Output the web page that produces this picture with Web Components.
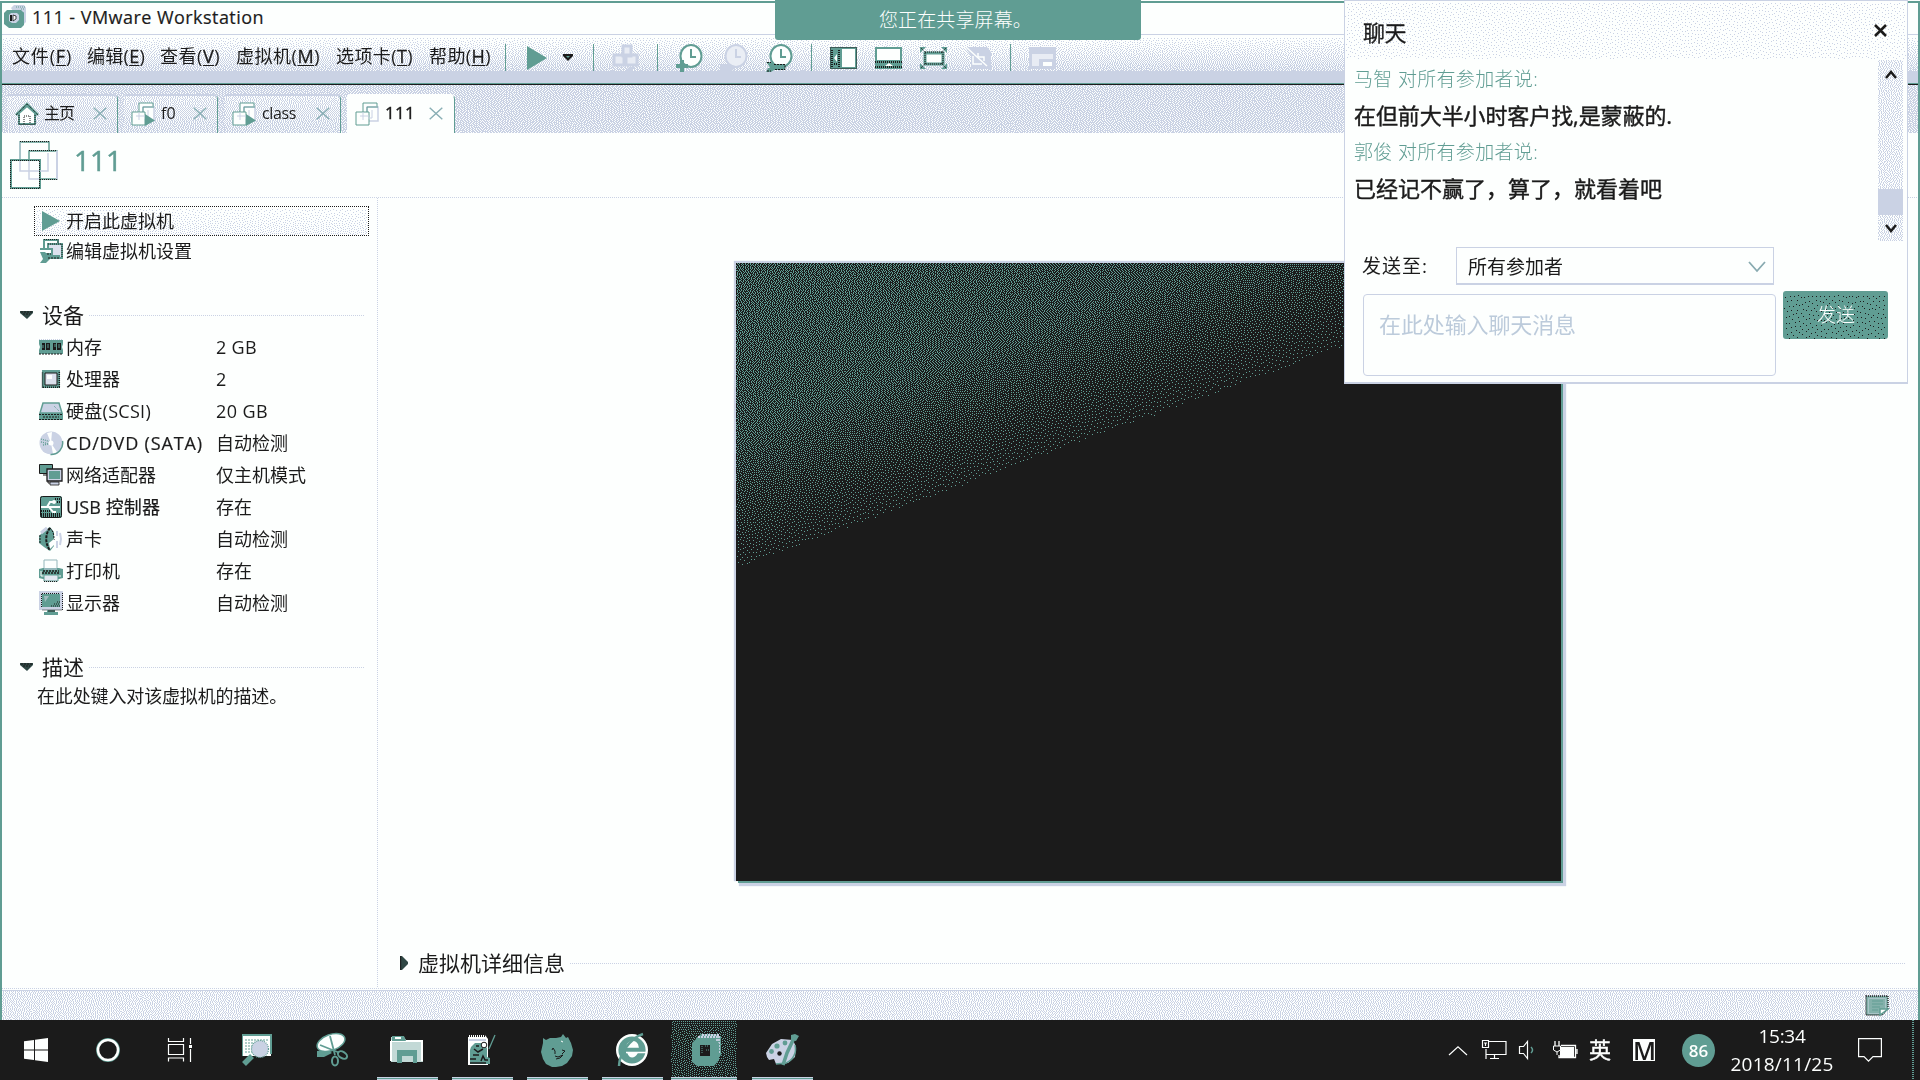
<!DOCTYPE html>
<html lang="zh-CN">
<head>
<meta charset="utf-8">
<title>111 - VMware Workstation</title>
<style>
html,body{margin:0;width:1920px;height:1080px;overflow:hidden;background:#fdfffe}
body{--k:#1b1b1b;--t:#609d93;--l:#cad2e4;--w:#fdfffe;color:#1b1b1b;font:18px/24px "Open Sans","Noto Sans CJK SC",sans-serif}
</style>
</head>
<body>
<desk-top></desk-top>
<script>
const define=(name,html,setup)=>{
  const t=document.createElement('template');
  t.innerHTML='<style>*{box-sizing:border-box}:host{display:block;box-sizing:border-box;flex:none}</style>'+html;
  customElements.define(name,class extends HTMLElement{
    connectedCallback(){
      if(this.shadowRoot)return;
      this.attachShadow({mode:'open'}).append(t.content.cloneNode(true));
      if(setup)setup(this,this.shadowRoot);
    }
  });
};
const K='#1b1b1b',T='#609d93',L='#cad2e4',W='#fdfffe';
const clock=(s,f,h)=>`<ellipse cx="15" cy="12" rx="10.5" ry="11" fill="${f}" stroke="${s}" stroke-width="2"/><path d="M15 5v8h5" fill="none" stroke="${h}" stroke-width="2"/>`;
const vms=`<path d="M8 1h14v11H8z" fill="#fdfffe" stroke="${T}"/><path d="M12 5h11v14H12z" fill="#fdfffe" stroke="${L}" stroke-width="1.5"/><path d="M12 17V5h11" fill="none" stroke="${T}"/><path d="M1 10h13v13H1z" fill="#fdfffe" stroke="${T}"/><path d="M8 10v8M5 14h9M17 8v8h-4" stroke="${L}" fill="none"/>`;
const ICONS={
 app:[22,24,`<path d="M7 3l3-3h10l2 3v14l-4 4z" fill="${L}"/><path d="M12 2h9M17 4h4M19 7v9" stroke="${T}" stroke-dasharray="1 1"/><path d="M3 5h14l3 3v12l-3 3H5l-5-4V8z" fill="${T}"/><path d="M5 10l2-2h6l2 2v5l-3 3H8l-3-2z" fill="${L}"/><path d="M6 10h2v6H6z" fill="${K}"/><path d="M9 10l3 1v3l-3 2z" fill="${W}" stroke="${K}" stroke-width=".8"/>`],
 play:[20,24,`<path d="M0 0L20 12L0 24z" fill="${T}"/>`],
 caret:[10,7,`<path d="M0 0h10v2L5 7L0 2z" fill="${K}"/><path d="M3 2h4L5 4z" fill="${T}"/>`],
 keys:[26,26,`<path d="M10 1h8v10h-8zM1 10h10v10H1zM13 10h11v10H13z" fill="#e8ecf4" stroke="${L}" stroke-width="3"/><path d="M12 26l4-4h6l-3 4z" fill="${L}"/>`],
 clockadd:[28,28,clock(T,W,T)+`<path d="M6 16v12M0 22h12" stroke="${T}" stroke-width="4"/>`],
 clockoff:[28,28,clock(L,'#eaeef5',L)+`<path d="M-1 20h10l6 3-4 4H-1z" fill="${L}"/>`],
 clockset:[28,28,clock(T,W,T)+`<path d="M0 18h5l3 2h11v6H8l-3 2H0l2-4H4l-1-2z" fill="${T}"/><path d="M1 18.500h4M8 20.500h11v5H8M1 27h4" stroke="${K}" fill="none" stroke-dasharray="2 1"/>`],
 side:[27,22,`<path d="M1 1h25v20H1z" fill="${W}" stroke="${T}" stroke-width="2"/><path d="M0 0h12v22H0z" fill="${T}"/><path d="M2 3v17M9 3v17M4 17h4" stroke="${K}" stroke-width="2" stroke-dasharray="1 1"/><path d="M.5.5h26v21H.5z" fill="none" stroke="${K}" stroke-dasharray="1 1"/><path d="M7 7v8l-3-4z" fill="${W}"/>`],
 under:[27,22,`<path d="M1 1h25v20H1z" fill="${W}" stroke="${T}" stroke-width="2"/><path d="M0 13h27v9H0z" fill="${T}"/><path d="M0 15h27M0 20h27" stroke="${K}" stroke-width="2" stroke-dasharray="1 1"/><path d="M10 19l4-3 4 3z" fill="${W}"/>`],
 full:[27,22,`<path d="M5 6h18v11H5z" fill="${W}" stroke="${T}" stroke-width="3"/><path d="M5 5h18v12H5z" fill="none" stroke="${K}" stroke-dasharray="1 1"/><path d="M0 6V0h6zM21 0h6v6zM0 16v6h6zM27 16v6h-6z" fill="${T}"/><path d="M1 1l5 5M26 1l-5 5M1 21l5-5M26 21l-5-5" stroke="${K}" stroke-dasharray="1 1"/>`],
 nounity:[27,24,`<path d="M0 1h22l4 5v17H6V10z" fill="${L}"/><path d="M8 10v8h9M13 7v4h6v4" stroke="${W}" fill="none" stroke-width="1.500"/><path d="M1 1l21 19" stroke="${W}" stroke-width="1.500"/>`],
 pip:[27,22,`<path d="M1.500 1.500h24v19h-24z" fill="#e8ecf4" stroke="${L}" stroke-width="3"/><path d="M0 0h27v7H0zM10 12h17v10H10z" fill="${L}"/><path d="M14 15h9v4h-9z" fill="${W}"/>`],
 home:[22,22,`<path d="M3 10v11h16V10L11 3z" fill="${W}" stroke="${T}" stroke-width="2"/><path d="M0 12L11 1l11 11" fill="none" stroke="${T}" stroke-width="2.500"/><path d="M0 12L11 1l11 11M3 12v9.500h16V12M8 21v-8h6v8" fill="none" stroke="${K}" stroke-dasharray="1 1"/>`],
 vm:[24,24,vms],
 vmon:[24,24,vms+`<path d="M14 12L24 18.500L14 24z" fill="${T}"/>`],
 vmbig:[48,48,`<path d="M10 1h29v29H10z" fill="${W}" stroke="${T}" stroke-width="1.500"/><path d="M10 30V1" stroke="${L}"/><path d="M19 10h28v28H19z" fill="${W}" stroke="${T}" stroke-width="1.500"/><path d="M47 10v28" stroke="${L}" stroke-width="2"/><path d="M1 19h29v28H1z" fill="${W}" stroke="${T}" stroke-width="2"/><path d="M10 .5h29M19 9.500h28M.5 19v28.500h29V19.500H.5M30 38.500h17" fill="none" stroke="${K}" stroke-dasharray="1 1"/><path d="M10 20v10h19M19 20v18h10M38 12v18h-8" fill="none" stroke="${L}" stroke-width="1.500"/>`],
 x:[14,13,`<path d="M.7.7l12.600 11.600M13.300.7L.7 12.300" stroke="#88aeb4" stroke-width="1.400"/>`],
 close:[13,13,`<path d="M1 1l11 11M12 1L1 12" stroke="${K}" stroke-width="2.600"/>`],
 edit:[24,24,`<path d="M5 1h14v10H5z" fill="${W}" stroke="${T}" stroke-width="2"/><path d="M9 5h14v14H9z" fill="#dde2ee" stroke="${T}" stroke-width="2"/><path d="M5 .5h14v4M9 5h14v14" fill="none" stroke="${K}" stroke-dasharray="1 1"/><path d="M1 10h12v5H6" fill="${W}" stroke="${T}" stroke-width="2"/><path d="M1 13h5l3 3h12v4H11l-4 4H1l3-4z" fill="${T}"/><path d="M9 19h11M8 15h4" stroke="${K}" fill="none" stroke-dasharray="2 1"/>`],
 tri:[13,8,`<path d="M0 0h13v2L7 8L0 2z" fill="#2f4744"/><path d="M1 1h11M3 3h7" stroke="${K}" stroke-dasharray="2 1"/>`],
 trir:[8,14,`<path d="M0 0h2l6 6v2l-6 6H0z" fill="#2f4744"/><path d="M.7 0v14" stroke="${K}"/>`],
 mem:[24,16,`<path d="M0 1h24v4l-1 3 1 3v4H0v-4l1-3-1-3z" fill="${T}"/><path d="M3 4h3v7H3zM7 4h4v7H7zM14 4h3v7h-3zM18 4h4v7h-4z" fill="${K}"/><path d="M0 .5h24" stroke="${L}" stroke-dasharray="1 1"/><path d="M0 15h24" stroke="${K}" stroke-dasharray="2 1"/><path d="M4 6v3M9 5v4M16 5v3M20 5v4" stroke="${T}"/>`],
 cpu:[18,18,`<path d="M0 0h18v18H0z" fill="${T}"/><path d="M.5 17.500V2M1 17.300h17M17.300 2v16" stroke="${K}" stroke-width="1.500" stroke-dasharray="1 1"/><path d="M3 3h12v12H3z" fill="#dbe0ec" stroke="${K}"/><path d="M5 5h5v4H5z" fill="${W}"/>`],
 disk:[24,18,`<path d="M4 1h16l3 10H1z" fill="${L}" stroke="${T}" stroke-width="1.500"/><path d="M15 4l5 5" stroke="${T}" stroke-dasharray="1 1"/><path d="M0 11h24v7H0z" fill="${T}"/><path d="M0 12.500h24M0 17.500h24M4 15h16" stroke="${K}" stroke-dasharray="2 1"/>`],
 cd:[24,24,`<circle cx="12" cy="12" r="11.500" fill="${L}"/><path d="M12 12L8 2l5-1zM12 12l6 9-4 2z" fill="${W}"/><path d="M2 8l10 3M2 11l9 2M4 14l6-1" stroke="${T}" fill="none" stroke-dasharray="1 1" stroke-width="1.300"/><path d="M23.500 10a11.500 11.500 0 0 1-12 13.500" stroke="${T}" fill="none" stroke-width="1.500"/><circle cx="12" cy="12" r="2.500" fill="${W}"/>`],
 net:[24,22,`<path d="M.5.5h13v9H.5z" fill="${T}" stroke="${K}"/><path d="M4 11h5v8h7" fill="none" stroke="${K}"/><path d="M8 5h15v12H8z" fill="${L}" stroke="${K}" stroke-width="1.300"/><path d="M10 7h11v8H10z" fill="${T}"/><path d="M11 18h9v3h-9z" fill="${L}" stroke="${K}" stroke-width=".8"/>`],
 usb:[22,22,`<rect width="22" height="22" rx="2" fill="${T}"/><path d="M1 18h20M1 20h20M15 3h6M17 6h4M1 15h9" stroke="${K}" stroke-width="2" stroke-dasharray="1 1"/><rect x=".5" y=".5" width="21" height="21" rx="2" fill="none" stroke="${K}"/><path d="M1 11h19M7 11l3-5h4M9 11l4 5h3" stroke="${W}" stroke-width="2" fill="none"/><circle cx="14" cy="6" r="2" fill="${W}"/>`],
 sound:[24,24,`<path d="M0 9L5 4l6-4 4 5v14l-4 5-6-4-5-4z" fill="${T}"/><path d="M2 6l6-5" stroke="${L}" stroke-width="3"/><path d="M11 1c-5 6-5 16 0 22" stroke="${K}" fill="none" stroke-width="2" stroke-dasharray="3 1"/><path d="M11 1c4 4 4 8 4 12M1 8v8" stroke="${K}" fill="none" stroke-dasharray="2 1"/><path d="M10 16l5-4v6l-4 4z" fill="${W}"/><path d="M18 4v5M18 14v7M21 6l1 6-1 6" stroke="${L}" stroke-width="2" fill="none"/>`],
 print:[24,22,`<path d="M5 0h13v9H5z" fill="${W}" stroke="#95b7bb"/><path d="M0 9l4-1h16l4 1v9l-4 1H4l-4-1z" fill="${T}"/><path d="M5 9h13" stroke="${L}"/><path d="M4 11h16M3 13h18" stroke="${K}" stroke-width="1.500" stroke-dasharray="2 1"/><path d="M2 11v5h3M19 16h3" stroke="${W}" fill="none"/><path d="M5 15h14v6H5z" fill="#e3e8f1" stroke="${T}"/><path d="M5 21.500h14" stroke="${K}" stroke-dasharray="1 1"/>`],
 disp:[24,24,`<path d="M0 0h24v19H0z" fill="${L}"/><path d="M3 3h18v13H3z" fill="${T}"/><path d="M23.500 2v17H3M12 15h9M15 13h6M18 11h3M3 2.500h18M2.500 3v13" stroke="${K}" fill="none" stroke-dasharray="1 1"/><path d="M5 5h5L6 11z" fill="#9fbcc0"/><path d="M8 19h8v3H8z" fill="${T}"/><path d="M5 21h14v3H5z" fill="${T}"/><path d="M9 20h7" stroke="${K}"/>`],
 note:[24,21,`<path d="M1 1h22v13l-6 6H1z" fill="#84b1ab" stroke="${K}" stroke-width="1.300" stroke-dasharray="1 1"/><path d="M3.500 3.500h17v11l-4 4h-13z" fill="none" stroke="#a9c4c8"/><path d="M7 6h11M7 9h11M7 12h8M7 15h6" stroke="${T}"/><path d="M15 20v-6h8z" fill="${W}" stroke="${T}" stroke-width="1.500"/>`],
 up:[12,10,`<path d="M1 8l5-6 5 6" stroke="${K}" stroke-width="2.500" fill="none"/>`],
 down:[12,10,`<path d="M1 2l5 6 5-6" stroke="${K}" stroke-width="2.500" fill="none"/>`],
 chev:[18,11,`<path d="M1 1l8 9 8-9" stroke="#88aab0" stroke-width="1.800" fill="none"/>`],
 win:[24,24,`<path d="M0 3.300L10 2v9.400H0zM11 1.800L24 0v11.400H11zM0 12.500h10V22L0 20.700zM11 12.500h13V24L11 22.200z" fill="${W}"/>`],
 cortana:[24,24,`<circle cx="12" cy="12" r="10.700" fill="none" stroke="${T}" stroke-width="2.500"/><circle cx="12" cy="12" r="10" fill="none" stroke="${W}" stroke-width="2.500"/>`],
 tasks:[24,24,`<path d="M.5 0v3.500h15V0M.5 6.500h15v10H.5zM.5 23.500V20h15v3.500M22.500 0v6M22.500 11v13" fill="none" stroke="${W}" stroke-width="1.200"/><path d="M21 7h3v3h-3z" fill="${W}"/>`],
 find:[30,34,`<path d="M0 2h29v21H0z" fill="${W}"/><path d="M0 1h30v2H0zM0 3h1v20H0zM28 3h2v18h-2z" fill="${T}"/><path d="M3 7h23M3 10h12M3 13h7M3 16h7M3 19h7" stroke="${T}" stroke-dasharray="2 1" stroke-width="1.200"/><circle cx="18" cy="16" r="8.500" fill="${L}" stroke="${T}" stroke-width="1.200" stroke-dasharray="1 1"/><path d="M2 31l8-8" stroke="${T}" stroke-width="5.500"/>`],
 snip:[32,34,`<path d="M1 18L12 17 16 20 8 24 1 24z" fill="${T}"/><ellipse cx="15" cy="9.500" rx="14.500" ry="8" transform="rotate(-20 15 9.500)" fill="${W}" stroke="${T}" stroke-width="1.500"/><path d="M14 3l5 19M4 12l20 8" stroke="${T}" stroke-width="1.800"/><ellipse cx="26.500" cy="22" rx="5" ry="3.200" transform="rotate(32 26.500 22)" fill="${K}" stroke="${T}" stroke-width="2"/><ellipse cx="19" cy="28" rx="3" ry="4.500" fill="${K}" stroke="${T}" stroke-width="2"/>`],
 folder:[32,28,`<path d="M0 1h13l2 3h17v22H0z" fill="#c2d9d6"/><path d="M0 5h32M0 5v20M31 5v20" stroke="${W}" stroke-width="2"/><path d="M1 0h12l2 5H1z" fill="${T}"/><path d="M4 2h6" stroke="${W}" stroke-width="2"/><path d="M6 14h20v13h-4v-7H11v7H6z" fill="${T}"/>`],
 notes:[30,34,`<path d="M1 2h17l3 4v26H1z" fill="${W}"/><path d="M1 3h18" stroke="${K}" stroke-width="2" stroke-dasharray="1 1"/><path d="M2 7h17" stroke="${L}" stroke-width="2"/><path d="M4 14l4-4h7l5 5v9l3 1v6H3V17z" fill="${T}"/><path d="M7 16l4 3 5-3M6 22h6M14 28l2-5 2 4h3M9 13h3M3 26h6M3 30h16" stroke="${K}" stroke-width="1.500" fill="none"/><circle cx="17" cy="12" r="2.800" fill="${W}" stroke="${K}"/><path d="M28 2l-6 14" stroke="${T}" stroke-width="1.300"/>`],
 fox:[32,34,`<path d="M2 5l3 2 4-2h6l5-1 2-3 3 4 2-1 3 6 2 7-1 6-5 7-5 3-6 1h-4l-6-3-3-5-2-7 2-9z" fill="${T}"/><path d="M11 17l1-2 2 3v3M21 17l3 1-3 3M14 23l3 1 5-2-3 3-4 1" stroke="${K}" stroke-width="1" fill="none"/><path d="M20 8l2 1" stroke="${W}"/>`],
 edge:[32,34,`<circle cx="16" cy="17" r="14.800" fill="${T}" stroke="${W}" stroke-width="2.400"/><path d="M11 14c1-7 10-7 11 0zM10 19.500h20M12 20c2 5 6 5 9 0z" fill="${W}" stroke="${W}" stroke-width="1.500"/><path d="M3 33C3 22 14 5 27 1" stroke="${T}" stroke-width="2.500" fill="none"/>`],
 vmw:[30,34,`<path d="M4 5l5-4h15l5 3v18l-5 5z" fill="${T}"/><path d="M6 4h19v4M10 2h17v18" stroke="${L}" stroke-width="1.800" fill="none" stroke-dasharray="2 1"/><path d="M4 6h17l6 4v17l-5 6H5l-5-4V10z" fill="${T}"/><path d="M8 12h10v11H8z" fill="${K}"/><path d="M10 13v8M13 13h3M14 17h3" stroke="${T}" stroke-dasharray="1 1"/>`],
 paint:[34,34,`<path d="M1 20l6-9L16 6l12 1 3 7-1 10-7 6-12 1-2-5-5 1-2-3z" fill="${L}"/><circle cx="6.500" cy="18.500" r="2.400" fill="${T}"/><circle cx="12" cy="13" r="2.600" fill="${T}"/><circle cx="20" cy="10" r="2.400" fill="${T}"/><circle cx="14.500" cy="20.500" r="2.200" fill="${K}"/><path d="M30 12c2 8-2 15-9 18l-10 1" stroke="${T}" stroke-width="1.500" fill="none"/><path d="M18 32l4-12 7-15" stroke="${T}" stroke-width="3.500" fill="none"/><path d="M26 2l4-1 4 2-3 5-5-1z" fill="${T}"/>`],
 trayup:[18,9,`<path d="M0 9L9 .8 18 9" stroke="${W}" stroke-width="1.200" fill="none"/>`],
 lan:[25,20,`<path d="M7 1.500h17v13H4M4 9v10M8 18.500h9M12.500 15v3.500M.5.500h6v7h-6zM2 3h3M3.500 3v3" stroke="${W}" fill="none" stroke-width="1.200"/>`],
 vol:[15,18,`<path d="M.5 5.500h4L8.500.5v17l-4-5h-4z" stroke="${W}" fill="none" stroke-width="1.200"/><path d="M12 6q3 3 0 6" stroke="${T}" stroke-width="1.500" fill="none"/>`],
 bat:[25,19,`<path d="M7 6h14v10H7z" fill="${W}"/><path d="M8 4.500h14.500v12H6V14M24 8v5M2 0v5M6 0v5" stroke="${W}" stroke-width="1.300" fill="none"/><path d="M.5 5h7v4L4 11 .5 9zM4 11v3" stroke="${W}" fill="${K}"/>`],
 notif:[24,24,`<path d="M.6.6h22.800v18H15l-4.500 4.500-4.500-4.500H.6z" fill="none" stroke="${W}" stroke-width="1.200"/>`]
};
define('ui-icon','<style>:host{line-height:0}</style><span></span>',(h,r)=>{
  const [w,ht,s]=ICONS[h.getAttribute('name')];
  const W2=h.getAttribute('w')||w,H2=h.getAttribute('h')||ht;
  r.querySelector('span').innerHTML=`<svg width="${W2}" height="${H2}" viewBox="0 0 ${w} ${ht}" preserveAspectRatio="none" style="display:block;overflow:visible">${s}</svg>`;
});
/* Text run spaced to fill the width given in w */
define('fit-text','<style>:host{white-space:nowrap}span{display:inline-block}</style><span><slot></slot></span>',(h,r)=>{
  const s=r.querySelector('span'),w=+h.getAttribute('w'),n=h.textContent.length;
  h.style.width=w+'px';
  s.style.letterSpacing=((w-s.getBoundingClientRect().width)/n).toFixed(3)+'px';
});
/* Two-colour error-diffused fill */
const FILLS={
  toolbar:(x,y,w,h)=>y>h-13?1:.06+.6*(y/(h-13)),
  strip:()=>.68, tab:(x,y,w,h)=>.42+.2*y/h, status:()=>.44, head:()=>.09, button:(x,y,w,h)=>.08+.18*y/h,
  scroll:()=>.42, send:()=>.05, active:()=>.24,
  screen:(x,y)=>{const t=305-.366*x-y;return t<0?0:(.4-.14*x/825-.09*y/305)*(.18+.82*Math.min(1,t/130));}
};
define('dither-fill','<style>:host{line-height:0}canvas{display:block}</style><canvas></canvas>',(h,r)=>{
  const w=+h.getAttribute('w'),ht=+h.getAttribute('h'),f=FILLS[h.getAttribute('kind')];
  const hex=c=>[1,3,5].map(i=>parseInt(c.substr(i,2),16));
  const a=hex(h.getAttribute('base')||W),b=hex(h.getAttribute('ink')||L);
  const c=r.querySelector('canvas');c.width=w;c.height=ht;
  const g=c.getContext('2d'),im=g.createImageData(w,ht);
  let e=new Float32Array(w+2),n=new Float32Array(w+2),seed=7;
  for(let y=0;y<ht;y++){
    const d=y%2?-1:1;
    for(let i=0;i<w;i++){
      const x=d>0?i:w-1-i,want=f(x,y,w,ht);
      seed=(seed*16807)%2147483647;
      const v=want+e[x+1],on=want>0&&v>.5+(seed/2147483647-.5)*.12?1:0,q=want>0?v-on:0;
      e[x+1+d]+=q*7/16;n[x+1-d]+=q*3/16;n[x+1]+=q*5/16;n[x+1+d]+=q/16;
      const p=(y*w+x)*4,k=on?b:a;
      im.data[p]=k[0];im.data[p+1]=k[1];im.data[p+2]=k[2];im.data[p+3]=255;
    }
    e=n;n=new Float32Array(w+2);
  }
  g.putImageData(im,0,0);
});
define('dot-rule','<style>:host{height:1px;background:repeating-linear-gradient(90deg,#cad2e4 0 1px,transparent 1px 2px)}:host([v]){width:1px;height:auto;background:repeating-linear-gradient(#cad2e4 0 1px,transparent 1px 2px)}</style>');
/* Content layered on a dithered ground */
define('dither-box','<style>:host{display:grid;overflow:hidden}dither-fill,div{grid-area:1/1;min-width:0;min-height:0}div{display:flex;align-items:center}</style><div><slot></slot></div>',(h,r)=>{
  const d=document.createElement('dither-fill');
  for(const k of ['w','h','kind','base','ink'])if(h.hasAttribute(k))d.setAttribute(k,h.getAttribute(k));
  r.querySelector('div').before(d);
  h.style.width=h.getAttribute('w')+'px';h.style.height=h.getAttribute('h')+'px';
});
define('title-bar',`<style>:host{height:32px;border-bottom:1px solid var(--l);display:flex;align-items:center;padding:0 0 3px 2px;gap:6px}</style><ui-icon name="app"></ui-icon><fit-text w="232" style="-webkit-text-stroke:.2px">111 - VMware Workstation</fit-text>`);
define('menu-bar',`<style>:host{border-bottom:1px solid var(--k)}nav{display:flex;height:49px;padding:0 0 3px 10px;align-items:center}nav>*{flex:none}nav>fit-text{padding-bottom:3px}u{text-underline-offset:2px;-webkit-text-stroke:.3px}i{width:1px;height:27px;background:var(--t)}dither-box{border-bottom:1px solid var(--t);box-sizing:content-box}</style>
<dither-box w="1916" h="48" kind="toolbar"><nav>
<fit-text w="60">文件(<u>F</u>)</fit-text><fit-text w="58" style="margin-left:15px">编辑(<u>E</u>)</fit-text><fit-text w="60" style="margin-left:15px">查看(<u>V</u>)</fit-text><fit-text w="84" style="margin-left:16px">虚拟机(<u>M</u>)</fit-text><fit-text w="77" style="margin-left:16px">选项卡(<u>T</u>)</fit-text><fit-text w="62" style="margin-left:16px">帮助(<u>H</u>)</fit-text>
<i style="margin-left:14px"></i><ui-icon name="play" style="margin-left:21px"></ui-icon><ui-icon name="caret" style="margin-left:16px"></ui-icon>
<i style="margin-left:20px"></i><ui-icon name="keys" style="margin-left:19px"></ui-icon>
<i style="margin-left:18px"></i><ui-icon name="clockadd" style="margin-left:18px"></ui-icon><ui-icon name="clockoff" style="margin-left:17px"></ui-icon><ui-icon name="clockset" style="margin-left:17px"></ui-icon>
<i style="margin-left:17px"></i><ui-icon name="side" style="margin-left:18px"></ui-icon><ui-icon name="under" style="margin-left:18px"></ui-icon><ui-icon name="full" style="margin-left:18px"></ui-icon><ui-icon name="nounity" style="margin-left:18px"></ui-icon>
<i style="margin-left:18px"></i><ui-icon name="pip" style="margin-left:18px"></ui-icon></nav></dither-box>`);
define('vm-tab',`<style>:host{border-right:1px solid var(--t);border-radius:3px 5px 0 0;height:39px;overflow:hidden;border-top:2px solid var(--l)}:host([on]){background:var(--w);border-top-color:var(--w)}.c{display:flex;align-items:center;height:35px;width:100%}slot{display:block}.g{flex:1}</style>`,(h,r)=>{
  const w=+h.getAttribute('w'),on=h.hasAttribute('on');h.style.width=w+'px';
  const box=document.createElement(on?'div':'dither-box');
  if(!on){box.setAttribute('w',w);box.setAttribute('h',37);box.setAttribute('kind','tab');}
  box.innerHTML=`<div class="c" style="padding:0 ${h.getAttribute('pr')||11}px 0 ${h.getAttribute('pl')||7}px"><ui-icon name="${h.getAttribute('icon')}"></ui-icon><slot style="margin:-2px 0 0 6px"></slot><span class="g"></span><ui-icon name="x"></ui-icon></div>`;
  if(!on)box.querySelector('.c').style.marginTop='-2px';
  r.append(box);
});
define('tab-strip',`<style>nav{display:flex;align-self:end;align-items:end;padding-left:5px;font-size:16px}</style>
<dither-box w="1916" h="48" kind="strip"><nav><vm-tab w="111" pl="9" icon="home"><fit-text w="30">主页</fit-text></vm-tab><vm-tab w="94" icon="vmon" style="margin-left:6px"><fit-text w="15">f0</fit-text></vm-tab><vm-tab w="116" icon="vmon" style="margin-left:7px"><fit-text w="34">class</fit-text></vm-tab><vm-tab on w="108" pl="8" icon="vm" style="margin-left:6px"><fit-text w="30" style="font-size:17px;-webkit-text-stroke:.4px">111</fit-text></vm-tab></nav></dither-box>`);
define('device-row',`<style>:host{display:flex;height:32px;align-items:center}span{width:27px;display:flex;justify-content:center;padding-right:3px}div{width:150px;white-space:nowrap}</style><span></span><div></div><b style="font-weight:400"><slot></slot></b>`,(h,r)=>{
  r.querySelector('span').innerHTML=`<ui-icon name="${h.getAttribute('icon')}"></ui-icon>`;
  const w=h.getAttribute('w');
  r.querySelector('div').innerHTML=w?`<fit-text w="${w}"${/[A-Z]/.test(h.getAttribute('label')[0])?' style="-webkit-text-stroke:.2px"':''}>${h.getAttribute('label')}</fit-text>`:h.getAttribute('label');
});
define('section-head',`<style>:host{display:flex;align-items:center;font-size:21px;height:28px}dot-rule{flex:1;margin-left:5px}</style><slot></slot><dot-rule></dot-rule>`,(h,r)=>{
  const i=document.createElement('ui-icon');i.setAttribute('name',h.getAttribute('icon')||'tri');i.style.marginRight=(h.getAttribute('gap')||9)+'px';
  r.querySelector('slot').before(i);
});
define('side-pane',`<style>:host{width:375px;padding:8px 12px 0 18px}.b{margin-left:14px;border:1px dotted var(--k);width:335px;height:30px}.b ui-icon{margin:0 6px 0 7px}.e{display:flex;align-items:center;height:24px;margin:3px 0 0 19px;gap:3px}.rows{margin-left:19px;padding-top:2px}</style>
<div class="b"><dither-box w="333" h="28" kind="button"><ui-icon name="play" w="18" h="20"></ui-icon>开启此虚拟机</dither-box></div>
<div class="e"><ui-icon name="edit"></ui-icon>编辑虚拟机设置</div>
<section-head style="margin-top:38px">设备</section-head>
<div class="rows">
<device-row icon="mem" label="内存"><fit-text w="41">2 GB</fit-text></device-row>
<device-row icon="cpu" label="处理器">2</device-row>
<device-row icon="disk" label="硬盘(SCSI)" w="85"><fit-text w="52">20 GB</fit-text></device-row>
<device-row icon="cd" label="CD/DVD (SATA)" w="137">自动检测</device-row>
<device-row icon="net" label="网络适配器">仅主机模式</device-row>
<device-row icon="usb" label="USB 控制器" w="94">存在</device-row>
<device-row icon="sound" label="声卡">自动检测</device-row>
<device-row icon="print" label="打印机">存在</device-row>
<device-row icon="disp" label="显示器">自动检测</device-row></div>
<section-head style="margin-top:34px">描述</section-head>
<div style="margin:3px 0 0 17px;white-space:nowrap"><fit-text w="250">在此处键入对该虚拟机的描述。</fit-text></div>`);
define('vm-view',`<style>:host{flex:1;padding:65px 13px 0 22px}.s{width:825px;margin-left:336px;box-shadow:2px 2px 0 var(--t),4px 4px 1px 1px var(--l),-1px -1px 1px 1px var(--l)}section-head{margin-top:68px}</style>
<div class="s"><dither-box w="825" h="618" kind="screen" base="#1b1b1b" ink="#609d93"></dither-box></div>
<section-head icon="trir" gap="10">虚拟机详细信息</section-head>`);
define('vm-window',`<style>:host{border:2px solid var(--t);border-width:2px 2px 0;background:var(--w)}.h{height:64px;display:flex;align-items:center;padding:0 0 0 8px;gap:16px;font-size:28px;color:var(--t)}.m{display:flex;height:790px}footer{border-top:1px solid var(--l)}</style>
<title-bar></title-bar><menu-bar></menu-bar><tab-strip></tab-strip>
<div class="h"><ui-icon name="vmbig"></ui-icon><fit-text w="48" style="-webkit-text-stroke:.5px;padding-bottom:10px">111</fit-text></div>
<dot-rule></dot-rule>
<div class="m"><side-pane></side-pane><dot-rule v></dot-rule><vm-view></vm-view></div>
<dot-rule></dot-rule><div style="height:1px"></div>
<footer><dither-box w="1916" h="29" kind="status"><ui-icon name="note" style="margin:0 0 0 1863px"></ui-icon></dither-box></footer>`);
define('share-banner',`<style>:host{position:absolute;left:775px;top:0;width:366px;height:40px;background:var(--t);color:var(--w);border-radius:0 0 3px 3px;display:flex;align-items:center;padding-left:104px;font-size:19px;font-weight:300}</style><fit-text w="153">您正在共享屏幕。</fit-text>`);
define('chat-line',`<style>:host{height:37px;color:var(--t);font-size:19px;line-height:37px;font-weight:300}:host([msg]){height:36px;line-height:35px;color:var(--k);font-size:22px;font-weight:400;-webkit-text-stroke:.4px}</style><slot></slot>`);
define('chat-panel',`<style>:host{position:absolute;left:1344px;top:0;width:564px;height:384px;border:1px solid var(--l);border-bottom-width:2px;background:var(--w);font-size:19px}
.log{display:flex;justify-content:space-between;height:182px;margin-top:1px}.lines{padding:1px 0 0 9px}.bar{display:flex;flex-direction:column;align-items:center;width:25px;height:181px;padding:10px 0 8px}.bar b{width:25px;height:26px;background:var(--l);margin:109px 0 8px}
.to{display:flex;align-items:center;padding-left:17px;margin-top:5px}.sel{width:318px;height:38px;border:1px solid var(--l);border-bottom-width:2px;display:flex;align-items:center;justify-content:space-between;padding:2px 7px 0 11px;margin-left:28px}
.in{display:flex;gap:7px;padding-left:18px;margin-top:9px}.ta{width:413px;height:82px;border:1px solid var(--l);border-radius:4px;color:#bccbdb;font-size:22px;padding:17px 15px}
.send{border-radius:3px;overflow:hidden;margin-top:-3px;height:48px;color:var(--w);font-weight:300}</style>
<dither-box w="562" h="58" kind="head"><fit-text w="43" style="margin-left:18px;padding-top:3px;font-size:22px;-webkit-text-stroke:.3px">聊天</fit-text><ui-icon name="close" style="margin:0 0 0 468px"></ui-icon></dither-box>
<div class="log"><div class="lines"><chat-line><fit-text w="184">马智 对所有参加者说:</fit-text></chat-line><chat-line msg><fit-text w="318">在但前大半小时客户找,是蒙蔽的.</fit-text></chat-line><chat-line><fit-text w="184">郭俊 对所有参加者说:</fit-text></chat-line><chat-line msg><fit-text w="308">已经记不赢了，算了，就看着吧</fit-text></chat-line></div>
<dither-box w="25" h="181" kind="scroll" style="margin-right:4px"><div class="bar"><ui-icon name="up"></ui-icon><b></b><ui-icon name="down"></ui-icon></div></dither-box></div>
<div class="to"><fit-text w="66">发送至:</fit-text><div class="sel"><fit-text w="95">所有参加者</fit-text><ui-icon name="chev"></ui-icon></div></div>
<div class="in"><div class="ta"><fit-text w="197">在此处输入聊天消息</fit-text></div><div class="send"><dither-box w="105" h="48" kind="send" base="#609d93" ink="#1b1b1b"><span style="margin-left:34px">发送</span></dither-box></div></div>`);
define('task-button',`<style>:host{width:61px;height:60px;display:flex;flex-direction:column;align-items:center}div{height:57px;display:flex;align-items:center;justify-content:center;padding-top:2px}i{display:none;width:100%;height:3px;background:linear-gradient(#cad2e4 33%,#609d93 33% 66%,#cad2e4 66%)}:host([run]) i{display:block}</style><div></div><i></i>`,(h,r)=>{
  r.querySelector('div').innerHTML=`<ui-icon name="${h.getAttribute('icon')}" style="margin-left:${h.getAttribute('dx')||0}px"></ui-icon>`;
});
define('task-bar',`<style>:host{height:60px;background:var(--k);color:var(--w);display:flex;align-items:flex-start}.l{display:flex;gap:14px}.r{display:flex;align-items:center;height:60px;margin-left:636px;font-size:19px}.m{width:22px;height:22px;background:var(--w);color:var(--k);font:600 25px/22px "Open Sans",sans-serif;text-align:center}.n{width:33px;height:33px;border-radius:50%;background:var(--t);font:600 17px/34px "Open Sans",sans-serif;text-align:center}.d{width:104px;line-height:28px;display:flex;flex-direction:column;align-items:center}.q{width:2px;height:60px;background:repeating-linear-gradient(#609d93 0 1px,#1b1b1b 1px 2px)}</style>
<div class="l"><task-button icon="win" style="width:24px;margin-left:24px"></task-button><task-button icon="cortana" style="width:24px;margin-left:34px"></task-button><task-button icon="tasks" style="width:24px;margin-left:34px"></task-button><task-button icon="find" dx="-2" style="margin-left:21px"></task-button><task-button icon="snip" dx="-2"></task-button><task-button run icon="folder" dx="-2"></task-button><task-button run icon="notes" dx="-2"></task-button><task-button run icon="fox" dx="-2"></task-button><task-button run icon="edge" dx="-2"></task-button>
<dither-box w="66" h="60" kind="active" base="#1b1b1b" ink="#609d93" style="margin:0 0 0 -6px"><task-button run icon="vmw" dx="6" style="width:66px"></task-button></dither-box><task-button run icon="paint" dx="-2" style="margin-left:1px"></task-button></div>
<div class="r"><ui-icon name="trayup"></ui-icon><ui-icon name="lan" style="margin-left:15px"></ui-icon><ui-icon name="vol" style="margin-left:12px"></ui-icon><ui-icon name="bat" style="margin-left:19px"></ui-icon><span style="font-size:22px;margin:-2px 0 0 11px;-webkit-text-stroke:.4px">英</span><div class="m" style="margin-left:22px">M</div><div class="n" style="margin-left:27px">86</div><div class="d" style="margin-left:15px"><fit-text w="47">15:34</fit-text><fit-text w="103">2018/11/25</fit-text></div><ui-icon name="notif" style="margin-left:24px"></ui-icon><div class="q" style="margin-left:30px"></div></div>`);
define('desk-top',`<style>:host{width:1920px;height:1080px;overflow:hidden;position:relative;background:var(--w);padding-top:1px}vm-window{height:1019px}</style>
<vm-window></vm-window><task-bar></task-bar><share-banner></share-banner><chat-panel></chat-panel>`);
</script>
</body>
</html>
